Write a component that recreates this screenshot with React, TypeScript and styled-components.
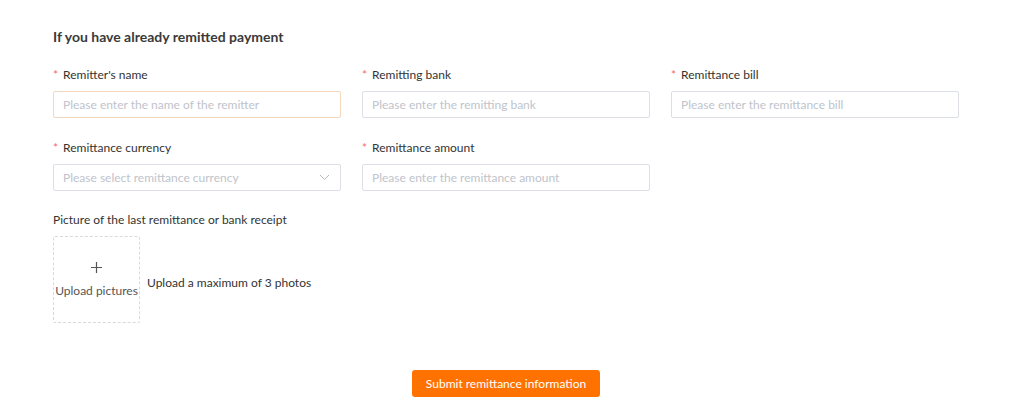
import React from 'react';
import styled, { createGlobalStyle } from 'styled-components';

const GlobalStyle = createGlobalStyle`
  body {
    margin: 0;
    background: #ffffff;
    font-family: Lato, "Noto Sans", "Liberation Sans", sans-serif;
    color: #333333;
  }
`;

const Page = styled.div`
  width: 906px;
  padding: 28px 0 0 53px;
`;

const Title = styled.h3`
  margin: 0 0 21px;
  font-size: 14px;
  line-height: 18px;
  font-weight: 700;
  color: #3a3a3a;
`;

const FieldGrid = styled.div`
  display: grid;
  grid-template-columns: repeat(3, 288px);
  column-gap: 21px;
  row-gap: 22px;
`;

const Field = styled.div`
  display: flex;
  flex-direction: column;
  gap: 8px;
`;

const Label = styled.label<{ required?: boolean }>`
  font-size: 12px;
  line-height: 16px;
  color: #333333;

  ${({ required }) =>
    required &&
    `&::before {
      content: '*';
      color: #f56c6c;
      margin-right: 5px;
    }`}
`;

const InputBox = styled.div<{ focused?: boolean }>`
  position: relative;
  display: flex;
  align-items: center;
  height: 27px;
  box-sizing: border-box;
  border: 1px solid ${({ focused }) => (focused ? '#f3d7bf' : '#dcdfe6')};
  border-radius: 2px;
  padding: 0 9px;
  font-size: 12px;
  color: #c0c4cc;
`;

const Chevron = styled.svg`
  position: absolute;
  right: 10px;
  top: 50%;
  margin-top: -4px;
`;

const UploadSection = styled.div`
  margin-top: 21px;
  display: flex;
  flex-direction: column;
  gap: 8px;
`;

const UploadRow = styled.div`
  display: flex;
  align-items: center;
  gap: 7px;
`;

const UploadBox = styled.div`
  width: 87px;
  height: 87px;
  box-sizing: border-box;
  border: 1px dashed #d9d9d9;
  border-radius: 2px;
  display: flex;
  flex-direction: column;
  align-items: center;
  justify-content: center;
  font-size: 12px;
  white-space: nowrap;
  color: #555555;
`;

const Plus = styled.svg`
  margin-bottom: 10px;
`;

const Hint = styled.span`
  font-size: 12px;
  color: #333333;
  padding-top: 6px;
`;

const Footer = styled.div`
  display: flex;
  justify-content: center;
  margin-top: 47px;
`;

const SubmitButton = styled.button`
  height: 27px;
  padding: 0 14px;
  border: none;
  border-radius: 3px;
  background: #ff7200;
  color: #ffffff;
  font-family: inherit;
  font-size: 12px;
  cursor: pointer;
`;

const fields = [
  { label: "Remitter's name", placeholder: 'Please enter the name of the remitter', focused: true },
  { label: 'Remitting bank', placeholder: 'Please enter the remitting bank' },
  { label: 'Remittance bill', placeholder: 'Please enter the remittance bill' },
  { label: 'Remittance currency', placeholder: 'Please select remittance currency', select: true },
  { label: 'Remittance amount', placeholder: 'Please enter the remittance amount' },
];

const App = () => {
  return (
    <>
      <GlobalStyle />
      <Page>
        <Title>If you have already remitted payment</Title>
        <FieldGrid>
          {fields.map((f) => (
            <Field key={f.label}>
              <Label required>{f.label}</Label>
              <InputBox focused={f.focused}>
                {f.placeholder}
                {f.select && (
                  <Chevron width="11" height="7" viewBox="0 0 11 7">
                    <path d="M1 1l4.5 4.5L10 1" fill="none" stroke="#b4b8bf" strokeWidth="1" />
                  </Chevron>
                )}
              </InputBox>
            </Field>
          ))}
        </FieldGrid>
        <UploadSection>
          <Label>Picture of the last remittance or bank receipt</Label>
          <UploadRow>
            <UploadBox>
              <Plus width="11" height="11" viewBox="0 0 11 11">
                <path d="M5.5 0v11M0 5.5h11" stroke="#555555" strokeWidth="1.2" />
              </Plus>
              Upload pictures
            </UploadBox>
            <Hint>Upload a maximum of 3 photos</Hint>
          </UploadRow>
        </UploadSection>
        <Footer>
          <SubmitButton>Submit remittance information</SubmitButton>
        </Footer>
      </Page>
    </>
  );
};

export default App;
